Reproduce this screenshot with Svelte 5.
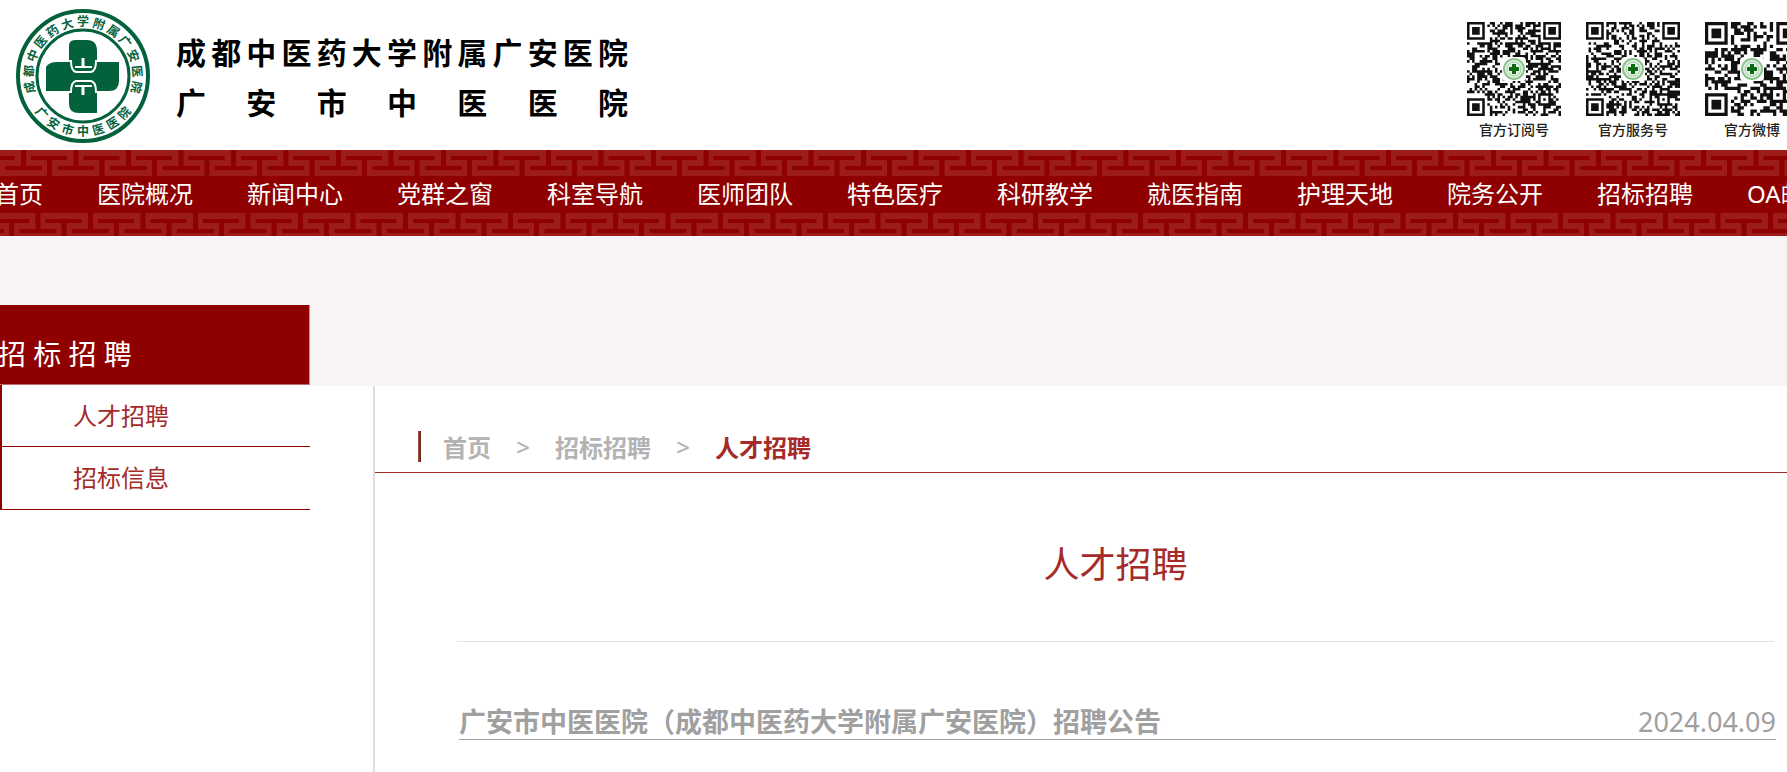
<script>
	const navItems = ['首页', '医院概况', '新闻中心', '党群之窗', '科室导航', '医师团队', '特色医疗', '科研教学', '就医指南', '护理天地', '院务公开', '招标招聘', 'OA邮箱'];
	const sideItems = ['人才招聘', '招标信息'];
	const news = [{ title: '广安市中医医院（成都中医药大学附属广安医院）招聘公告', date: '2024.04.09' }];

	const ringTop = [...'成都中医药大学附属广安医院'];
	const ringBottom = [...'广安市中医医院'];

	const codes = [
		{ label: '官方订阅号', size: 37, seed: 11, path: '' },
		{ label: '官方服务号', size: 37, seed: 47, path: '' },
		{ label: '官方微博', size: 29, seed: 83, path: '' }
	];

	// is the module dark in a square target of the given width
	function target(x, y, width) {
		const mid = (width - 1) / 2;
		const d = Math.max(Math.abs(x - mid), Math.abs(y - mid));
		return d !== mid - 1;
	}

	function buildCode(size, seed) {
		let state = seed;
		let path = '';
		const edge = size - 8;
		for (let y = 0; y < size; y++) {
			for (let x = 0; x < size; x++) {
				state = (state * 16807) % 2147483647;
				let dark = state % 1000 < 520;
				const left = x < 8, right = x >= edge, top = y < 8, bottom = y >= edge;
				if ((left && (top || bottom)) || (right && top)) {
					const fx = right ? x - (size - 7) : x;
					const fy = bottom ? y - (size - 7) : y;
					dark = fx >= 0 && fx < 7 && fy >= 0 && fy < 7 && target(fx, fy, 7);
				} else if (x >= size - 9 && x <= size - 5 && y >= size - 9 && y <= size - 5) {
					dark = target(x - (size - 9), y - (size - 9), 5);
				}
				if (dark) path += `M${x} ${y}h1v1h-1z`;
			}
		}
		return path;
	}

	for (const code of codes) code.path = buildCode(code.size, code.seed);
</script>

<div class="page">
	<header>
		<a class="brand" href="/">
			<svg class="logo" viewBox="-68 -68 136 136" role="img" aria-label="院徽">
				<circle r="65" fill="#fff" stroke="#03623c" stroke-width="4" />
				<circle r="46" fill="none" stroke="#03623c" stroke-width="3" />
				{#each ringTop as char, i}
					<text transform="rotate({(i - 6) * 17})" y="-50">{char}</text>
				{/each}
				{#each ringBottom as char, i}
					<text transform="rotate({(3 - i) * 16})" y="60">{char}</text>
				{/each}
				<path fill="#03623c" d="M-37 -9Q-34 -14 -26 -14H-14V-30Q-14 -36 -8 -36H4Q14 -36 14 -25V-14H36V5Q36 15 26 15H14V37H-4Q-14 37 -14 28V15H-37Z" />
				<path fill="none" stroke="#fff" stroke-width="2" d="M-15 -15H-12Q-12 -5 -7 -4H8Q13 -5 13 -15H15M-15 16H-12Q-12 6 -7 5H8Q13 6 13 16H15" />
				<path fill="none" stroke="#fff" stroke-width="2" d="M-8 -9H9M-8 10H9" />
				<path fill="none" stroke="#fff" stroke-width="3" d="M0 -18V-9M0 10V19" />
			</svg>
			<span class="names">
				<span>成都中医药大学附属广安医院</span>
				<span>广安市中医医院</span>
			</span>
		</a>
		<div class="codes">
			{#each codes as code}
				<figure>
					<svg viewBox="0 0 94 94" aria-hidden="true">
						<path d={code.path} transform="scale({94 / code.size})" fill="#111" />
						<rect x="35" y="35" width="24" height="24" rx="4" fill="#fff" />
						<circle cx="47" cy="47" r="10" fill="#e6f2e6" stroke="#8cc48f" stroke-width="2" />
						<circle cx="47" cy="47" r="7" fill="none" stroke="#9dcc9f" />
						<path d="M45 42h4v3h3v4h-3v3h-4v-3h-3v-4h3z" fill="#0a6b12" />
					</svg>
					<figcaption>{code.label}</figcaption>
				</figure>
			{/each}
		</div>
	</header>

	<nav>
		<svg class="fret" aria-hidden="true">
			<defs>
				<pattern id="fret" width="105" height="26" patternUnits="userSpaceOnUse">
					<rect width="105" height="26" fill="#9c1c1c" />
					<g fill="#8f0000">
						<path id="motif" d="M21 0h5v16h16v4H5v-4h16zM31 6h36v4H52v16h-5V10H31z" />
						<use href="#motif" x="52.5" />
						<use href="#motif" x="-52.5" />
					</g>
				</pattern>
			</defs>
			<rect width="100%" height="26" fill="url(#fret)" />
		</svg>
		<ul>
			{#each navItems as item}
				<li><a href="/">{item}</a></li>
			{/each}
		</ul>
		<svg class="fret lower" aria-hidden="true">
			<rect width="100%" height="26" fill="url(#fret)" />
		</svg>
	</nav>

	<div class="banner"></div>

	<div class="body">
		<aside>
			<h2>招 标 招 聘</h2>
			<ul>
				{#each sideItems as item}
					<li><a href="/">{item}</a></li>
				{/each}
			</ul>
		</aside>

		<main>
			<div class="crumbs">
				<span class="mark"></span>
				<a href="/">首页</a>
				<span class="sep">&gt;</span>
				<a href="/">招标招聘</a>
				<span class="sep">&gt;</span>
				<a class="current" href="/">人才招聘</a>
			</div>
			<div class="content">
				<h1>人才招聘</h1>
				<ul class="news">
					{#each news as item}
						<li>
							<a href="/">{item.title}</a>
							<time>{item.date}</time>
						</li>
					{/each}
				</ul>
			</div>
		</main>
	</div>
</div>

<style>
	:global(body) {
		background: #fff;
		overflow: hidden;
	}

	.page {
		overflow: hidden;
		font-family: 'Noto Sans', 'Noto Sans CJK SC', sans-serif;
		font-size: 24px;
	}

	a {
		color: inherit;
		text-decoration: none;
	}

	ul {
		list-style: none;
		margin: 0;
		padding: 0;
	}

	header {
		display: flex;
		justify-content: space-between;
		height: 150px;
		margin-right: -12px;
	}

	.brand {
		display: flex;
		padding: 8px 0 0 15px;
	}

	.logo {
		width: 136px;
		height: 136px;
	}

	.logo text {
		font-family: 'Noto Sans CJK SC', sans-serif;
		font-size: 12px;
		font-weight: 700;
		text-anchor: middle;
		fill: #03623c;
	}

	.names {
		width: 452px;
		margin: 20px 0 0 25px;
		font-size: 30px;
		font-weight: 700;
		line-height: 50px;
		color: #000;
	}

	.names span {
		display: block;
		text-align: justify;
		text-align-last: justify;
		text-justify: inter-character;
	}

	.codes {
		display: flex;
		gap: 25px;
		padding-top: 22px;
	}

	figure {
		margin: 0;
		width: 94px;
		text-align: center;
	}

	figure svg {
		display: block;
		width: 94px;
		height: 94px;
	}

	figcaption {
		font-size: 14px;
		font-weight: 500;
		line-height: 20px;
		margin-top: 4px;
		color: #222;
		white-space: nowrap;
	}

	nav {
		height: 86px;
		overflow: hidden;
		background: #8f0000;
	}

	.fret {
		display: block;
		width: 100%;
		height: 26px;
	}

	.lower {
		width: 110%;
		margin-left: -38px;
	}

	/* the menu is wider than the window and runs off both sides */
	nav ul {
		display: flex;
		margin-left: -32px;
		height: 37px;
	}

	nav li {
		flex: none;
		padding: 0 27px;
		line-height: 36px;
		color: #fff;
	}

	.banner {
		height: 150px;
		background: #f8f4f5;
	}

	.body {
		display: flex;
	}

	aside {
		flex: none;
		width: 310px;
		margin: -81px 63px 0 0;
	}

	aside h2 {
		box-sizing: border-box;
		height: 80px;
		margin: 0;
		padding-top: 29px;
		border-right: 1px solid #d48a8a;
		border-bottom: 1px solid #c06a6a;
		background: #8f0000;
		color: #fff;
		font-size: 28px;
		font-weight: 400;
		line-height: 40px;
		text-indent: -2px;
	}

	aside ul {
		border-left: 2px solid #8f0000;
		background: #fff;
	}

	aside li {
		box-sizing: border-box;
		height: 63px;
		padding-left: 71px;
		line-height: 62px;
		border-bottom: 1px solid #8f0000;
		color: #a52a2a;
	}

	aside li:first-child {
		height: 62px;
	}

	main {
		flex: 1;
		min-width: 0;
		min-height: 386px;
		border-left: 2px solid #e2dcdf;
	}

	.crumbs {
		display: flex;
		align-items: center;
		height: 31px;
		padding: 45px 0 10px 43px;
		border-bottom: 1px solid #a52a2a;
		color: #b3b3b3;
		font-weight: 700;
	}

	.mark {
		width: 3px;
		height: 31px;
		margin-right: 22px;
		background: linear-gradient(90deg, #a8503c, #5a2418);
	}

	.sep {
		width: 64px;
		text-align: center;
		font-weight: 500;
	}

	.current {
		color: #a52a2a;
	}

	.content {
		margin: 0 13px 0 82px;
	}

	h1 {
		margin: 0;
		padding: 65px 0 49px;
		border-bottom: 1px solid #e3e3e3;
		color: #a52a2a;
		font-size: 36px;
		font-weight: 400;
		line-height: 54px;
		text-align: center;
	}

	.news li {
		display: flex;
		justify-content: space-between;
		margin: 62px -2px 0 2px;
		border-bottom: 1px solid #a0a0a0;
		color: #a0a0a0;
		font-size: 27px;
		line-height: 35px;
	}

	.news a {
		font-weight: 700;
	}
</style>
